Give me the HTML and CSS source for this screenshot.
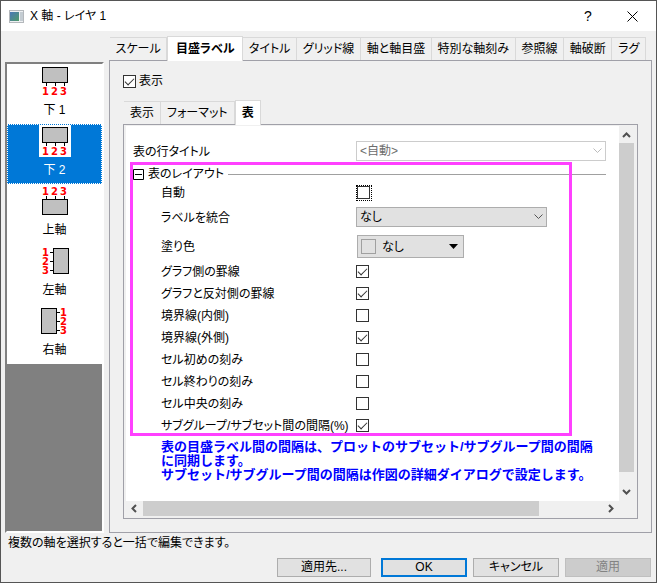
FILE: index.html
```html
<!DOCTYPE html>
<html lang="ja">

<head>
    <meta charset="UTF-8">
    <meta name="viewport" content="width=device-width, initial-scale=1.0">
    <title>X 軸 - レイヤ 1</title>
    <link rel="stylesheet" href="styles.css">
</head>

<body>
<div class="dialog">
    <header class="titlebar">
        <svg class="app-icon" width="15" height="13" viewBox="0 0 15 13">
            <defs>
                <linearGradient id="screen" x1="0" y1="0" x2="1" y2="1">
                    <stop offset="0" stop-color="#4a78b8"/>
                    <stop offset="1" stop-color="#4f9a68"/>
                </linearGradient>
            </defs>
            <rect x="0.5" y="0.5" width="14" height="12" fill="#eef0f2" stroke="#b4b8bc"/>
            <rect x="1" y="2" width="9" height="9" fill="url(#screen)"/>
            <rect x="11" y="2" width="3" height="9" fill="#c4ccd2"/>
        </svg>
        <h1>X 軸 - レイヤ 1</h1>
        <button class="title-button" type="button" aria-label="ヘルプ">?</button>
        <button class="title-button" type="button" aria-label="閉じる">
            <svg width="11" height="11" viewBox="0 0 11 11"><path d="M0.5 0.5L10.5 10.5M10.5 0.5L0.5 10.5" stroke="#000" fill="none"/></svg>
        </button>
    </header>

    <main class="content">
        <ul class="axis-list">
            <li>
                <button class="axis" type="button">
                    <svg class="axis-icon" width="32" height="32" viewBox="0 0 32 32">
                        <rect class="box" x="3.5" y="2.5" width="25" height="15"/>
                        <path class="tick" d="M7.5 18v3M16.5 18v3M25.5 18v3"/>
                        <text x="3 12 21" y="30">123</text>
                    </svg>
                    <span>下 1</span>
                </button>
            </li>
            <li>
                <button class="axis selected" type="button">
                    <svg class="axis-icon" width="32" height="32" viewBox="0 0 32 32">
                        <rect class="box" x="3.5" y="2.5" width="25" height="15"/>
                        <path class="tick" d="M7.5 18v3M16.5 18v3M25.5 18v3"/>
                        <text x="3 12 21" y="30">123</text>
                    </svg>
                    <span>下 2</span>
                </button>
            </li>
            <li>
                <button class="axis" type="button">
                    <svg class="axis-icon" width="32" height="32" viewBox="0 0 32 32">
                        <rect class="box" x="3.5" y="14.5" width="25" height="15"/>
                        <path class="tick" d="M7.5 11v3M16.5 11v3M25.5 11v3"/>
                        <text x="3 12 21" y="10">123</text>
                    </svg>
                    <span>上軸</span>
                </button>
            </li>
            <li>
                <button class="axis" type="button">
                    <svg class="axis-icon" width="32" height="32" viewBox="0 0 32 32">
                        <rect class="box" x="14.5" y="3.5" width="15" height="25"/>
                        <path class="tick" d="M11 7.5h3M11 16.5h3M11 25.5h3"/>
                        <text x="3 3 3" y="11 20 29">123</text>
                    </svg>
                    <span>左軸</span>
                </button>
            </li>
            <li>
                <button class="axis" type="button">
                    <svg class="axis-icon" width="32" height="32" viewBox="0 0 32 32">
                        <rect class="box" x="2.5" y="3.5" width="15" height="25"/>
                        <path class="tick" d="M18 7.5h3M18 16.5h3M18 25.5h3"/>
                        <text x="21 21 21" y="11 20 29">123</text>
                    </svg>
                    <span>右軸</span>
                </button>
            </li>
        </ul>

        <section class="pages">
            <nav class="tabs">
                <button class="tab" type="button">スケール</button>
                <button class="tab active" type="button">目盛ラベル</button>
                <button class="tab" type="button">タイトル</button>
                <button class="tab" type="button">グリッド線</button>
                <button class="tab" type="button">軸と軸目盛</button>
                <button class="tab" type="button">特別な軸刻み</button>
                <button class="tab" type="button">参照線</button>
                <button class="tab" type="button">軸破断</button>
                <button class="tab" type="button">ラグ</button>
            </nav>

            <div class="panel outer-panel">
                <label class="show-label"><input class="check" type="checkbox" checked>表示</label>

                <nav class="tabs sub-tabs">
                    <button class="tab" type="button">表示</button>
                    <button class="tab" type="button">フォーマット</button>
                    <button class="tab active" type="button">表</button>
                </nav>

                <div class="panel scroll-panel">
                    <form class="settings">
                        <div class="row title-row">
                            <label for="row-title">表の行タイトル</label>
                            <div class="select-box wide">
                                <select id="row-title" disabled>
                                    <option>&lt;自動&gt;</option>
                                </select>
                                <svg width="9" height="6" viewBox="0 0 9 6"><path d="M0.5 0.5L4.5 4.5L8.5 0.5"/></svg>
                            </div>
                        </div>

                        <div class="group">
                            <div class="group-title">
                                <svg width="11" height="11" viewBox="0 0 11 11"><path d="M0.5 0.5h10v10h-10zM2 5.5h7" fill="none" stroke="#000"/></svg>
                                <h2>表のレイアウト</h2>
                            </div>
                            <div class="row auto-row">
                                <label for="auto">自動</label>
                                <span class="focus-box"><input class="check" id="auto" type="checkbox"></span>
                            </div>
                            <div class="row merge-row">
                                <label for="merge">ラベルを統合</label>
                                <div class="select-box">
                                    <select id="merge">
                                        <option>なし</option>
                                    </select>
                                    <svg width="9" height="6" viewBox="0 0 9 6"><path d="M0.5 0.5L4.5 4.5L8.5 0.5"/></svg>
                                </div>
                            </div>
                            <div class="row fill-row">
                                <label for="fill">塗り色</label>
                                <button class="fill-button" id="fill" type="button">
                                    <span class="swatch"></span>
                                    <span class="fill-name">なし</span>
                                    <svg width="9" height="5" viewBox="0 0 9 5"><path d="M0 0h9L4.5 5z"/></svg>
                                </button>
                            </div>
                            <div class="row">
                                <label for="near-line">グラフ側の罫線</label>
                                <input class="check" id="near-line" type="checkbox" checked>
                            </div>
                            <div class="row">
                                <label for="far-line">グラフと反対側の罫線</label>
                                <input class="check" id="far-line" type="checkbox" checked>
                            </div>
                            <div class="row">
                                <label for="inner-border">境界線(内側)</label>
                                <input class="check" id="inner-border" type="checkbox">
                            </div>
                            <div class="row">
                                <label for="outer-border">境界線(外側)</label>
                                <input class="check" id="outer-border" type="checkbox" checked>
                            </div>
                            <div class="row">
                                <label for="cell-start">セル初めの刻み</label>
                                <input class="check" id="cell-start" type="checkbox">
                            </div>
                            <div class="row">
                                <label for="cell-end">セル終わりの刻み</label>
                                <input class="check" id="cell-end" type="checkbox">
                            </div>
                            <div class="row">
                                <label for="cell-middle">セル中央の刻み</label>
                                <input class="check" id="cell-middle" type="checkbox">
                            </div>
                            <div class="row">
                                <label for="gap">サブグループ/サブセット間の間隔(%)</label>
                                <input class="check" id="gap" type="checkbox" checked>
                            </div>
                            <div class="highlight"></div>
                        </div>

                        <p class="note">表の目盛ラベル間の間隔は、プロットのサブセット/サブグループ間の間隔<br>に同期します。<br>サブセット/サブグループ間の間隔は作図の詳細ダイアログで設定します。</p>
                    </form>

                    <div class="scrollbar vertical">
                        <svg width="15" height="17" viewBox="0 0 15 17"><path d="M4 11L7.5 7.5L11 11"/></svg>
                        <div class="thumb"></div>
                        <svg width="15" height="17" viewBox="0 0 15 17"><path d="M4 6L7.5 9.5L11 6"/></svg>
                    </div>
                    <div class="scrollbar horizontal">
                        <svg width="17" height="15" viewBox="0 0 17 15"><path d="M10 4L6.5 7.5L10 11"/></svg>
                        <div class="thumb"></div>
                        <svg width="17" height="15" viewBox="0 0 17 15"><path d="M7 4L10.5 7.5L7 11"/></svg>
                    </div>
                </div>
            </div>
        </section>
    </main>

    <footer>
        <p class="hint">複数の軸を選択すると一括で編集できます。</p>
        <div class="buttons">
            <button class="push apply-to" type="button">適用先...</button>
            <button class="push default" type="button">OK</button>
            <button class="push" type="button">キャンセル</button>
            <button class="push" type="button" disabled>適用</button>
        </div>
    </footer>
</div>
</body>

</html>
```
FILE: styles.css
```css
* {
    box-sizing: border-box;
}

body {
    margin: 0;
    background-color: #f0f0f0;
    color: #000;
}

body, button, select, input {
    font-family: "Liberation Sans", "Noto Sans CJK JP", sans-serif;
    font-size: 12px;
    line-height: 16px;
    font-feature-settings: "palt";
}

button {
    color: #000;
    padding: 0;
    margin: 0;
}

h1, h2, p, ul {
    margin: 0;
    padding: 0;
    font-size: 12px;
    font-weight: normal;
}

svg {
    display: block;
    flex: none;
}

.dialog {
    min-height: 100vh;
    border: 1px solid #555;
    display: flex;
    flex-direction: column;
}

/* Title bar */
.titlebar {
    height: 30px;
    background-color: #fff;
    display: flex;
    align-items: center;
    padding-left: 8px;
    padding-right: 2px;
}

.titlebar h1 {
    flex: 1;
    margin-left: 6px;
}

.title-button {
    width: 44px;
    height: 28px;
    border: none;
    background: none;
    display: flex;
    align-items: center;
    justify-content: center;
    font-size: 14px;
}

.content {
    flex: 1;
    display: grid;
    grid-template-columns: 99px 1fr;
    gap: 5px;
    padding: 5px 4px 0 4px;
}

/* Axis list */
.axis-list {
    list-style: none;
    margin-top: 26px;
    background-color: #808080;
    border: 2px solid #fff;
    border-top-color: #808080;
    border-left-color: #808080;
}

.axis {
    width: 100%;
    height: 60px;
    border: 1px solid #fff;
    background-color: #fff;
    display: flex;
    flex-direction: column;
    align-items: center;
    gap: 5px;
}

.axis.selected {
    background-color: #0078d7;
    border: 1px dotted #fff;
    color: #fff;
}

.axis-icon {
    background-color: #fff;
}

.axis-icon .box {
    fill: #c0c0c0;
    stroke: #000;
}

.axis-icon .tick {
    stroke: #000;
}

.axis-icon text {
    fill: #f00;
    font: bold 10px "DejaVu Sans", sans-serif;
}

/* Tabs */
.pages {
    display: flex;
    flex-direction: column;
    min-width: 0;
}

.tabs {
    display: flex;
    align-items: flex-end;
    height: 25px;
    padding-left: 1px;
    padding-right: 6px;
    margin-bottom: -1px;
    position: relative;
}

.tab {
    flex: 1 1 auto;
    height: 23px;
    margin-bottom: 1px;
    padding: 0 4px;
    border: 1px solid #d9d9d9;
    border-left: none;
    border-bottom: none;
    background-color: #f0f0f0;
    white-space: nowrap;
}

.tab.active {
    height: 25px;
    margin-bottom: 0;
    padding: 0 6px;
    border-left: 1px solid #d9d9d9;
    background-color: #fff;
    font-weight: bold;
}

.sub-tabs {
    margin-top: 11px;
}

.sub-tabs .tab {
    flex: none;
    padding: 0 6px;
}

.panel {
    border: 1px solid #a0a0a8;
}

.outer-panel {
    flex: 1;
    display: flex;
    flex-direction: column;
    padding: 12px 13px 13px 13px;
}

.show-label {
    display: flex;
    align-items: center;
    gap: 3px;
}

.scroll-panel {
    flex: 1;
    display: grid;
    grid-template-columns: 1fr 15px;
    grid-template-rows: 1fr 15px;
    padding: 1px 3px 2px 2px;
}

/* Settings */
.settings {
    background-color: #fff;
    padding: 15px 13px 0 7px;
}

.row {
    display: grid;
    grid-template-columns: 195px 1fr;
    align-items: center;
    justify-items: start;
    height: 22px;
    padding-left: 28px;
    white-space: nowrap;
}

.row label {
    padding-top: 2px;
}

.title-row {
    grid-template-columns: 223px 1fr;
    height: 20px;
    padding-left: 0;
    margin-bottom: 2px;
}

.auto-row {
    height: 16px;
}

.auto-row label, .fill-row label {
    padding-top: 0;
}

.merge-row {
    height: 32px;
}

.fill-row {
    height: 27px;
}

.group {
    position: relative;
}

.group-title {
    height: 22px;
    display: flex;
    align-items: center;
    gap: 4px;
}

.group-title::after {
    content: "";
    flex: 1;
    border-top: 1px solid #a0a0a0;
}

.highlight {
    position: absolute;
    top: -1px;
    bottom: 0;
    left: -3px;
    right: 34px;
    border: 3px solid #ff40ff;
    pointer-events: none;
}

.check {
    appearance: none;
    width: 13px;
    height: 13px;
    margin: 0;
    border: 1px solid #333;
    background-color: #fff;
    display: block;
}

.check:checked::before {
    content: "";
    display: block;
    width: 8px;
    height: 4px;
    margin: 2px 1px;
    border-left: 1px solid #333;
    border-bottom: 1px solid #333;
    transform: rotate(-45deg);
}

.focus-box {
    border: 1px dotted #000;
    padding: 0 1px 1px 0;
}

.select-box {
    width: 191px;
    display: grid;
    align-items: center;
}

.select-box.wide {
    width: 100%;
}

.select-box select, .select-box svg {
    grid-area: 1 / 1;
}

.select-box select {
    appearance: none;
    width: 100%;
    height: 20px;
    padding: 0 20px 0 3px;
    border: 1px solid #adadad;
    border-radius: 0;
    background-color: #e1e1e1;
    color: #000;
}

.select-box select:disabled {
    border-color: #ccc;
    background-color: #fff;
    color: #6d6d6d;
    opacity: 1;
}

.select-box svg {
    justify-self: end;
    margin-right: 4px;
    fill: none;
    stroke: #555;
    pointer-events: none;
}

.select-box select:disabled + svg {
    stroke: #bbb;
}

.fill-button {
    width: 107px;
    height: 23px;
    margin-left: 1px;
    padding: 0 5px 0 3px;
    border: 1px solid #adadad;
    background-color: #e1e1e1;
    display: flex;
    align-items: center;
    gap: 6px;
    text-align: left;
}

.swatch {
    width: 15px;
    height: 15px;
    border: 1px solid #a0a0a0;
}

.fill-name {
    flex: 1;
}

.note {
    margin-top: 4px;
    padding-left: 28px;
    color: #00f;
    font-size: 13px;
    font-weight: bold;
    font-feature-settings: normal;
    line-height: 14px;
    white-space: nowrap;
}

/* Scrollbars */
.scrollbar {
    display: flex;
    background-color: #f0f0f0;
}

.scrollbar .thumb {
    background-color: #cdcdcd;
}

.scrollbar path {
    fill: none;
    stroke: #505050;
    stroke-width: 2;
}

.vertical {
    flex-direction: column;
    justify-content: space-between;
}

.vertical .thumb {
    flex: 1;
    margin-bottom: 12px;
}

.horizontal .thumb {
    flex: 1;
    margin-right: 63px;
}

/* Footer */
footer {
    padding: 2px 5px 5px 7px;
}

.buttons {
    display: flex;
    justify-content: flex-end;
    gap: 6px;
    margin-top: 7px;
}

.push {
    width: 86px;
    height: 19px;
    border: 1px solid #adadad;
    background-color: #e1e1e1;
    line-height: 15px;
}

.push.apply-to {
    width: 94px;
    margin-right: 4px;
}

.push.default {
    border: 2px solid #0078d7;
}

.push:disabled {
    border-color: #bfbfbf;
    background-color: #ccc;
    color: #838383;
}
```
